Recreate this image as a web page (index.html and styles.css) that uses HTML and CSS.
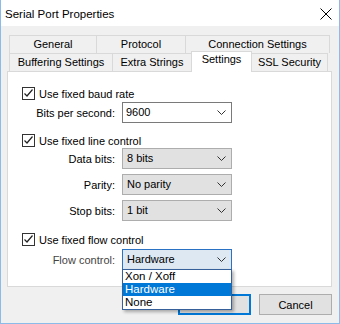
FILE: index.html
```html
<!DOCTYPE html>
<html lang="en">
<head>
    <meta charset="UTF-8">
    <title>Serial Port Properties</title>
    <link rel="stylesheet" href="styles.css">
</head>
<body>

    <div class="window">
        <div class="titlebar">
            <span class="title">Serial Port Properties</span>
            <svg class="close" width="12" height="12" viewBox="0 0 12 12">
                <path d="M0.5 0.5 L11.5 11.5 M11.5 0.5 L0.5 11.5" stroke="#000" stroke-width="1" fill="none"/>
            </svg>
        </div>

        <div class="client">
            <!-- two rows of tabs, the selected one sits on the bottom row -->
            <div class="tabs">
                <div class="tab-row">
                    <div class="tab t-general">General</div>
                    <div class="tab t-protocol">Protocol</div>
                    <div class="tab t-connection">Connection Settings</div>
                </div>
                <div class="tab-row">
                    <div class="tab t-buffering">Buffering Settings</div>
                    <div class="tab t-extra">Extra Strings</div>
                    <div class="tab t-settings selected">Settings</div>
                    <div class="tab t-ssl">SSL Security</div>
                </div>
            </div>

            <div class="panel">
                <div class="check first">
                    <span class="box"><svg width="11" height="11" viewBox="0 0 11 11"><path d="M1.5 5.5 L4 8 L9.5 1.5" stroke="#222" stroke-width="1.2" fill="none"/></svg></span>
                    <span>Use fixed baud rate</span>
                </div>
                <div class="field">
                    <label>Bits per second:</label>
                    <div class="combo edit">9600<svg class="chev" width="9" height="5" viewBox="0 0 9 5"><path d="M0.5 0.5 L4.5 4.5 L8.5 0.5" stroke="#333" fill="none"/></svg></div>
                </div>

                <div class="check gap-big">
                    <span class="box"><svg width="11" height="11" viewBox="0 0 11 11"><path d="M1.5 5.5 L4 8 L9.5 1.5" stroke="#222" stroke-width="1.2" fill="none"/></svg></span>
                    <span>Use fixed line control</span>
                </div>
                <div class="field tight">
                    <label>Data bits:</label>
                    <div class="combo">8 bits<svg class="chev" width="9" height="5" viewBox="0 0 9 5"><path d="M0.5 0.5 L4.5 4.5 L8.5 0.5" stroke="#333" fill="none"/></svg></div>
                </div>
                <div class="field">
                    <label>Parity:</label>
                    <div class="combo">No parity<svg class="chev" width="9" height="5" viewBox="0 0 9 5"><path d="M0.5 0.5 L4.5 4.5 L8.5 0.5" stroke="#333" fill="none"/></svg></div>
                </div>
                <div class="field">
                    <label>Stop bits:</label>
                    <div class="combo">1 bit<svg class="chev" width="9" height="5" viewBox="0 0 9 5"><path d="M0.5 0.5 L4.5 4.5 L8.5 0.5" stroke="#333" fill="none"/></svg></div>
                </div>

                <div class="check gap-big2">
                    <span class="box"><svg width="11" height="11" viewBox="0 0 11 11"><path d="M1.5 5.5 L4 8 L9.5 1.5" stroke="#222" stroke-width="1.2" fill="none"/></svg></span>
                    <span>Use fixed flow control</span>
                </div>
                <div class="field flow">
                    <label class="dim">Flow control:</label>
                    <div class="combo open">Hardware<svg class="chev" width="9" height="5" viewBox="0 0 9 5"><path d="M0.5 0.5 L4.5 4.5 L8.5 0.5" stroke="#333" fill="none"/></svg>
                        <ul class="dropdown">
                            <li>Xon / Xoff</li>
                            <li class="hot">Hardware</li>
                            <li>None</li>
                        </ul>
                    </div>
                </div>
            </div>

            <div class="buttons">
                <button class="btn default">OK</button>
                <button class="btn">Cancel</button>
            </div>
        </div>
    </div>

</body>
</html>
```

FILE: styles.css
```css
body {
    margin: 0;
    background-color: #fff;
    font-family: "Liberation Sans", Arial, sans-serif;
    font-size: 11px;
    color: #000;
}
.window {
    width: 340px;
    height: 324px;
    box-sizing: border-box;
    border: 1px solid #8bbbe9;
    border-top: none;
    display: flex;
    flex-direction: column;
}
.titlebar {
    height: 26px;
    background-color: #fff;
    display: flex;
    align-items: center;
    justify-content: space-between;
    padding: 0 7px 0 4px;
}
.title {
    font-size: 11.5px;
    margin-top: 1px;
}
.close {
    margin-top: 1px;
}
.client {
    flex: 1;
    background-color: #f0f0f0;
    padding: 9px 7px 0 6px;
}
.tabs {
    margin-left: 2px;
}
.tab-row {
    display: flex;
    height: 18px;
}
.tab {
    box-sizing: border-box;
    height: 18px;
    border: 1px solid #d9d9d9;
    border-bottom: none;
    margin-left: -1px;
    background-color: #f0f0f0;
    text-align: center;
    line-height: 17px;
    color: #000;
}
.tab:first-child {
    margin-left: 0;
}
.tab-row + .tab-row .tab {
    border-top-color: #d9d9d9;
}
.t-general { width: 88px; }
.t-protocol { width: 90px; }
.t-connection { width: 145px; }
.t-buffering { width: 104px; }
.t-extra { width: 80px; }
.t-settings { width: 61px; }
.t-ssl { width: 77px; }
.tab.selected {
    position: relative;
    z-index: 1;
    height: 21px;
    margin-top: -2px;
    background-color: #fff;
    line-height: 15px;
}
.panel {
    box-sizing: border-box;
    width: 325px;
    height: 216px;
    background-color: #fff;
    border: 1px solid #d9d9d9;
    padding: 15px 0 0 14px;
}
.check {
    display: flex;
    align-items: center;
    height: 13px;
}
.check .box {
    box-sizing: border-box;
    width: 13px;
    height: 13px;
    border: 1px solid #333;
    background-color: #fff;
    margin-right: 4px;
    display: flex;
}
.check .box svg {
    display: block;
}
.gap-big { margin-top: 11px; }
.gap-big2 { margin-top: 12px; }
.field {
    display: flex;
    align-items: center;
    margin-top: 5px;
}
.check.first + .field { margin-top: 2px; }
.field.tight { margin-top: 1px; }
.field.flow { margin-top: 3px; }
.field label {
    width: 93px;
    margin-right: 7px;
    text-align: right;
}
.field label.dim {
    color: #444;
}
.combo {
    position: relative;
    box-sizing: border-box;
    width: 110px;
    height: 21px;
    padding-left: 4px;
    line-height: 19px;
    background-color: #e1e1e1;
    border: 1px solid #adadad;
}
.combo.edit {
    background-color: #fff;
    border-color: #7a7a7a;
    padding-left: 3px;
}
.combo.open {
    background-color: #dde8f3;
    border-color: #2a73c4;
}
.chev {
    position: absolute;
    right: 5px;
    top: 7px;
}
.dropdown {
    list-style: none;
    margin: 0;
    padding: 0;
    position: absolute;
    z-index: 5;
    left: -1px;
    top: 19px;
    width: 110px;
    box-sizing: border-box;
    background-color: #fff;
    border: 1px solid #36609a;
    box-shadow: 2px 2px 3px rgba(0, 0, 0, 0.3);
}
.dropdown li {
    height: 13px;
    line-height: 13px;
    padding-left: 2px;
    font-size: 11.5px;
}
.dropdown li.hot {
    background-color: #0078d7;
    color: #fff;
}
.buttons {
    display: flex;
    justify-content: flex-end;
    gap: 8px;
    width: 325px;
    margin-top: 7px;
}
.btn {
    box-sizing: border-box;
    width: 73px;
    height: 21px;
    padding: 0;
    font-family: "Liberation Sans", Arial, sans-serif;
    font-size: 11px;
    background-color: #e1e1e1;
    border: 1px solid #adadad;
    color: #000;
}
.btn.default {
    border: 2px solid #0078d7;
}
```
